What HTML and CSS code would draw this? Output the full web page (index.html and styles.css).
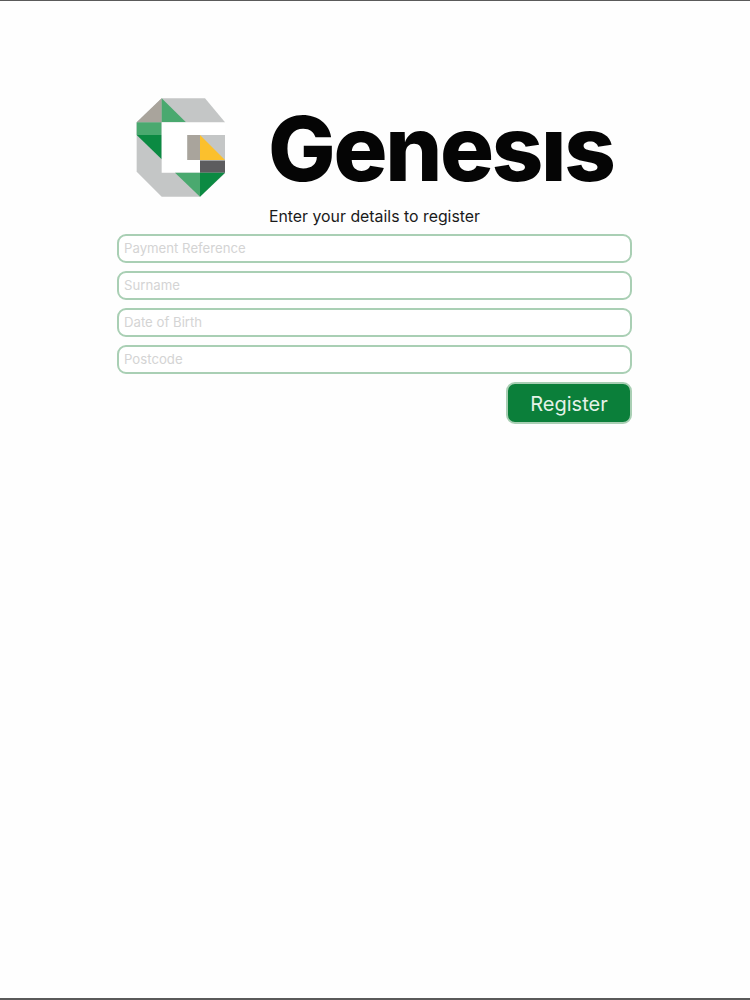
FILE: index.html
```html
<!DOCTYPE html>
<html lang="en">
<head>
<meta charset="utf-8">
<title>Genesis - Register</title>
<link rel="stylesheet" href="styles.css">
</head>
<body>
<main class="page">
  <header class="brand">
    <svg class="logo" viewBox="0 0 330 345" aria-hidden="true">
      <polygon fill="#c4c6c6" points="110,25 240,25 300,97 300,250 225,320 110,320 35,245 35,97"/>
      <polygon fill="#a9a49c" points="35,97 110,25 110,97"/>
      <polygon fill="#4aa96f" points="110,25 183,97 110,97"/>
      <rect fill="#4aa96f" x="35" y="97" width="75" height="38"/>
      <polygon fill="#0b8a42" points="35,135 110,135 110,208"/>
      <polygon fill="#ffffff" points="110,97 300,97 300,135 187,135 187,210 225,210 225,248 110,248"/>
      <rect fill="#a9a49c" x="187" y="135" width="38" height="75"/>
      <polygon fill="#fbc02d" points="225,135 300,210 225,210"/>
      <rect fill="#5c5c5e" x="225" y="212" width="75" height="36"/>
      <polygon fill="#4aa96f" points="150,248 225,248 225,320"/>
      <polygon fill="#0b8a42" points="225,248 300,248 225,320"/>
    </svg>
    <h1 class="wordmark">Genesıs</h1>
  </header>
  <p class="intro">Enter your details to register</p>
  <form class="form">
    <input class="field" type="text" placeholder="Payment Reference">
    <input class="field" type="text" placeholder="Surname">
    <input class="field" type="text" placeholder="Date of Birth">
    <input class="field" type="text" placeholder="Postcode">
    <button class="submit" type="button">Register</button>
  </form>
</main>
</body>
</html>
```

FILE: styles.css
```css
html, body {
  margin: 0;
  padding: 0;
  height: 100%;
}
body {
  background: #fefefe;
  font-family: Inter, "Liberation Sans", sans-serif;
  color: #1a1a1a;
}
.page {
  box-sizing: border-box;
  height: 1000px;
  border-top: 1px solid #5a5a5a;
  border-bottom: 2px solid #5a5a5a;
  padding: 89px 118px 0 117px;
  overflow: hidden;
}
.brand {
  display: flex;
  align-items: center;
  height: 115px;
  padding-left: 8px;
}
.logo {
  width: 110px;
  height: 115px;
  flex: none;
}
.wordmark {
  margin: 2px 0 0 33px;
  font-size: 90px;
  line-height: 115px;
  font-weight: 800;
  color: #050505;
  letter-spacing: -2.3px;
}
.intro {
  margin: 2px 0 0;
  height: 27px;
  line-height: 20px;
  font-size: 15.85px;
  text-align: center;
}
.form {
  display: flex;
  flex-direction: column;
  gap: 8px;
}
.field {
  box-sizing: border-box;
  width: 100%;
  height: 29px;
  padding: 0 5px 2px;
  border: 2px solid #a9cfb4;
  border-radius: 9px;
  background: #ffffff;
  font-family: inherit;
  font-size: 13.2px;
  outline: none;
}
.field::placeholder {
  color: #d4d4d4;
  opacity: 1;
}
.submit {
  box-sizing: border-box;
  align-self: flex-end;
  width: 126px;
  height: 42px;
  margin-top: 0;
  padding: 2px 0 0;
  border: 2px solid #a9cfb4;
  border-radius: 9px;
  background: #0b7f3a;
  color: #e4f2e8;
  font-family: inherit;
  font-size: 20px;
}
```
